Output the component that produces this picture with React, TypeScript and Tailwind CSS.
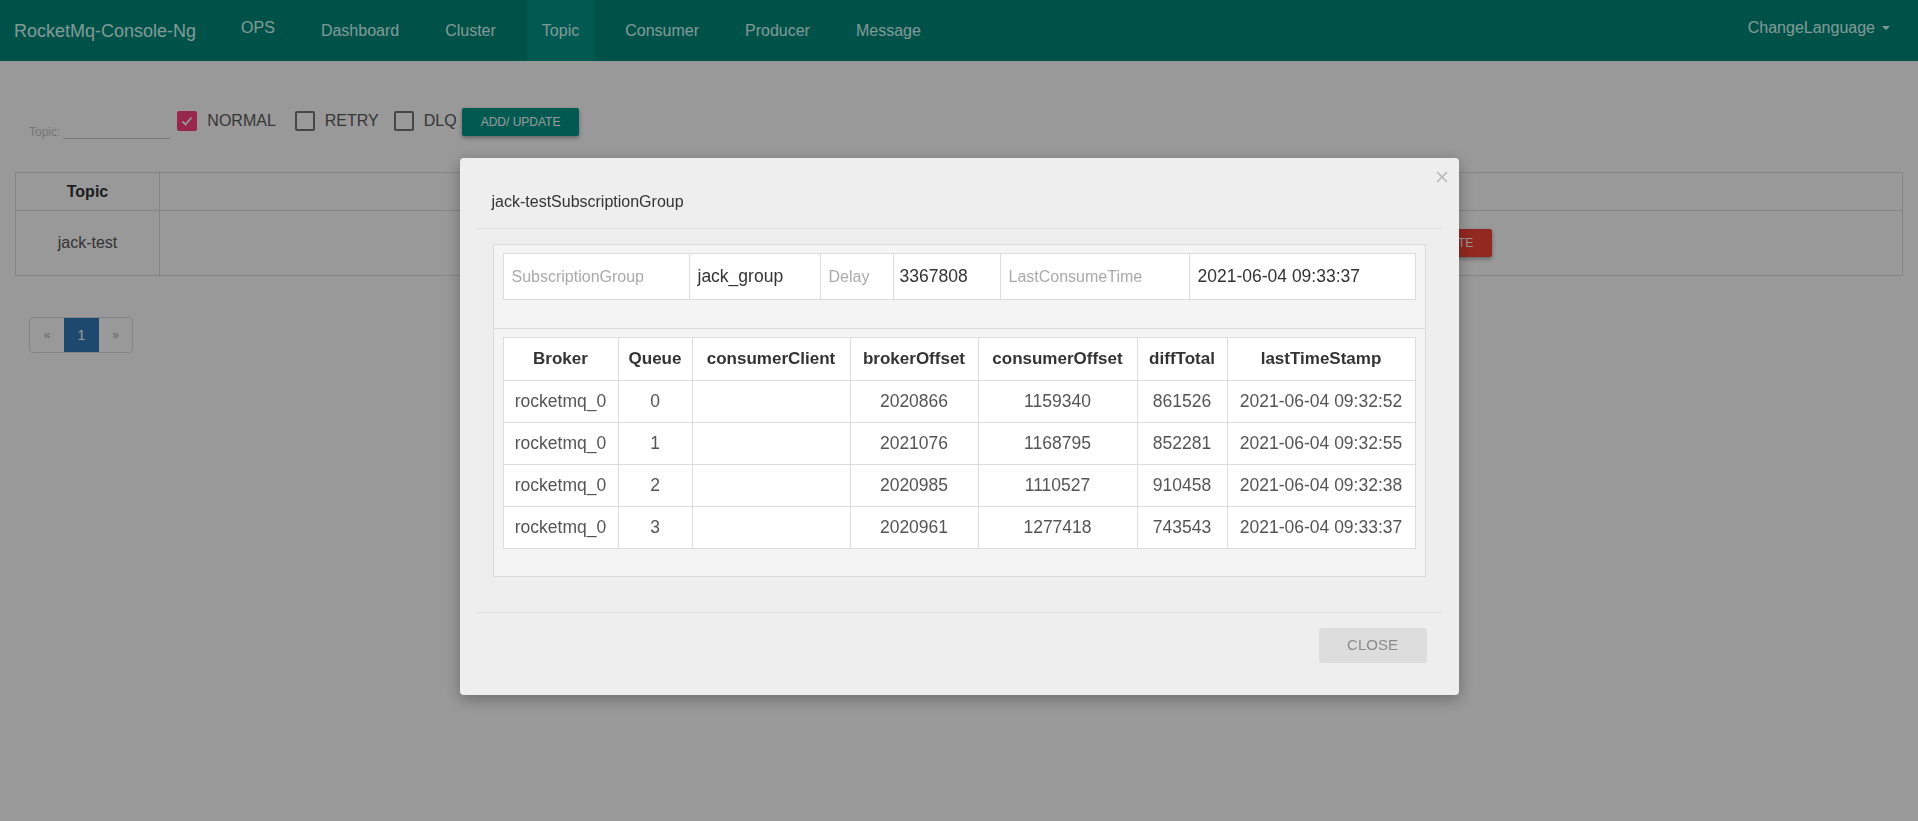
import React from "react";

const navItems = ["Dashboard", "Cluster", "Topic", "Consumer", "Producer", "Message"];

const rowButtons = [
  "STATUS",
  "ROUTER",
  "CONSUMER MANAGE",
  "TOPIC CONFIG",
  "SEND MESSAGE",
  "RESET CONSUMER OFFSET",
  "DELETE",
];

const queueRows = [
  { broker: "rocketmq_0", queue: "0", client: "", brokerOffset: "2020866", consumerOffset: "1159340", diff: "861526", ts: "2021-06-04 09:32:52" },
  { broker: "rocketmq_0", queue: "1", client: "", brokerOffset: "2021076", consumerOffset: "1168795", diff: "852281", ts: "2021-06-04 09:32:55" },
  { broker: "rocketmq_0", queue: "2", client: "", brokerOffset: "2020985", consumerOffset: "1110527", diff: "910458", ts: "2021-06-04 09:32:38" },
  { broker: "rocketmq_0", queue: "3", client: "", brokerOffset: "2020961", consumerOffset: "1277418", diff: "743543", ts: "2021-06-04 09:33:37" },
];

function Checkbox({ label, checked, mr }: { label: string; checked?: boolean; mr: string }) {
  return (
    <label className={`flex items-center h-[20px] mt-[3px] ${mr}`}>
      {checked ? (
        <span className="w-[20px] h-[20px] rounded-[2px] bg-[#ff4081] flex items-center justify-center">
          <svg width="14" height="14" viewBox="0 0 14 14">
            <polyline points="2.5,7.5 5.5,10.5 11.5,3.5" fill="none" stroke="#ffffff" strokeWidth="1.8" />
          </svg>
        </span>
      ) : (
        <span className="w-[20px] h-[20px] rounded-[2px] border-2 border-[#757575] bg-white" />
      )}
      <span className="ml-[10px] text-[16px] text-[#5a5a5a] leading-[20px]">{label}</span>
    </label>
  );
}

export default function App() {
  return (
    <div className="relative w-full h-[821px] overflow-hidden bg-white font-['Liberation_Sans',Arial,sans-serif]">
      {/* Navbar */}
      <nav className="h-[61px] bg-[#00897b] flex items-stretch text-[#d9fff8]">
        <div className="pl-[14px] pr-[14px] flex items-center text-[18px] pt-[1px]">RocketMq-Console-Ng</div>
        <ul className="ml-[16px] flex items-stretch gap-[16px]">
          <li className="px-[15px] flex items-center text-[16px] pb-[5px]">OPS</li>
          {navItems.map((n) => (
            <li
              key={n}
              className={`px-[15px] flex items-center text-[16px] pt-[1px] ${n === "Topic" ? "bg-[#009688]" : ""}`}
            >
              {n}
            </li>
          ))}
        </ul>
        <div className="ml-auto pr-[28px] flex items-center text-[16px] pb-[5px]">
          ChangeLanguage
          <span className="ml-[7px] w-0 h-0 border-t-[4px] border-t-[#d9fff8] border-x-[4px] border-x-transparent" />
        </div>
      </nav>

      {/* Page content */}
      <main className="px-[15px]">
        <div className="mt-[47px] pl-[14px] flex items-start">
          <div className="mt-[14px] flex items-end h-[17px]">
            <span className="text-[12px] leading-[14px] text-[#c6c6c6]">Topic:</span>
            <span className="ml-[3px] w-[107px] h-[17px] border-b border-[#c6c6c6]" />
          </div>
          <div className="ml-[7px] flex items-start">
            <Checkbox label="NORMAL" checked mr="mr-[19px]" />
            <Checkbox label="RETRY" mr="mr-[15px]" />
            <Checkbox label="DLQ" mr="mr-[5px]" />
          </div>
          <button className="h-[28px] px-[19px] rounded-[2px] bg-[#009688] text-white text-[12px] shadow-[0_2px_4px_rgba(0,0,0,0.35)]">
            ADD/ UPDATE
          </button>
        </div>

        <table className="mt-[33px] w-full border-collapse border border-[#dddddd] table-fixed">
          <colgroup>
            <col className="w-[144px]" />
            <col />
          </colgroup>
          <thead>
            <tr className="h-[38px]">
              <th className="border border-[#dddddd] text-[16px] font-bold text-[#333333]">Topic</th>
              <th className="border border-[#dddddd] text-[16px] font-bold text-[#333333]">Operation</th>
            </tr>
          </thead>
          <tbody>
            <tr className="h-[65px]">
              <td className="border border-[#dddddd] text-center text-[16px] text-[#555555]">jack-test</td>
              <td className="border border-[#dddddd]">
                <div className="flex justify-center gap-[7px]">
                  {rowButtons.map((b) => (
                    <button
                      key={b}
                      className={`h-[28px] px-[19px] rounded-[2px] text-[12px] text-white whitespace-nowrap shadow-[0_2px_4px_rgba(0,0,0,0.35)] ${
                        b === "DELETE" ? "bg-[#f44336]" : "bg-[#009688]"
                      }`}
                    >
                      {b}
                    </button>
                  ))}
                </div>
              </td>
            </tr>
          </tbody>
        </table>

        <div className="mt-[41px] ml-[14px] inline-flex h-[36px] rounded-[4px] border border-[#dddddd] overflow-hidden text-[12px]">
          <span className="w-[34px] flex items-center justify-center text-[#aaaaaa]">«</span>
          <span className="w-[35px] flex items-center justify-center bg-[#337ab7] text-white text-[14px]">1</span>
          <span className="w-[33px] flex items-center justify-center text-[#aaaaaa]">»</span>
        </div>
      </main>

      {/* Backdrop */}
      <div className="fixed inset-0 bg-black/40" />

      {/* Modal */}
      <div className="fixed inset-0 flex justify-center items-start pt-[158px]">
        <div className="relative w-[999px] bg-[#eeeeee] rounded-[4px] shadow-[0_4px_16px_rgba(0,0,0,0.3)]">
          <button className="absolute top-[13px] right-[11px] w-[12px] h-[12px]">
            <svg width="12" height="12" viewBox="0 0 12 12">
              <line x1="1" y1="1" x2="11" y2="11" stroke="#b3b3b3" strokeWidth="1.4" />
              <line x1="11" y1="1" x2="1" y2="11" stroke="#b3b3b3" strokeWidth="1.4" />
            </svg>
          </button>

          <div className="mx-[18px] border-b border-[#dddddd]">
            <div className="h-[70px] pt-[17px] pl-[14px] flex items-center text-[16px] text-[#333333]">
              jack-testSubscriptionGroup
            </div>
          </div>

          <div className="px-[33px] pt-[15px] pb-[35px]">
            <div className="border border-[#dadada] bg-[#f4f4f4]">
              <div className="px-[9px] pt-[8px] pb-[28px] border-b border-[#dadada]">
                <table className="w-full table-fixed border-collapse bg-white border border-[#dddddd]">
                  <colgroup>
                    <col className="w-[186px]" />
                    <col className="w-[131px]" />
                    <col className="w-[73px]" />
                    <col className="w-[107px]" />
                    <col className="w-[189px]" />
                    <col />
                  </colgroup>
                  <tbody>
                    <tr className="h-[46px]">
                      <td className="border border-[#dddddd] px-[8px] text-[16px] text-[#aaaaaa]">SubscriptionGroup</td>
                      <td className="border border-[#dddddd] px-[8px] text-[17.5px] text-[#333333]">jack_group</td>
                      <td className="border border-[#dddddd] px-[8px] text-[16px] text-[#aaaaaa]">Delay</td>
                      <td className="border border-[#dddddd] px-[6px] text-[17.5px] text-[#333333]">3367808</td>
                      <td className="border border-[#dddddd] px-[8px] text-[16px] text-[#aaaaaa]">LastConsumeTime</td>
                      <td className="border border-[#dddddd] px-[8px] text-[17.5px] text-[#333333]">2021-06-04 09:33:37</td>
                    </tr>
                  </tbody>
                </table>
              </div>
              <div className="px-[9px] pt-[8px] pb-[27px]">
                <table className="w-full table-fixed border-collapse bg-white border border-[#dddddd]">
                  <colgroup>
                    <col className="w-[115px]" />
                    <col className="w-[74px]" />
                    <col className="w-[158px]" />
                    <col className="w-[128px]" />
                    <col className="w-[159px]" />
                    <col className="w-[90px]" />
                    <col />
                  </colgroup>
                  <thead>
                    <tr className="h-[43px]">
                      {["Broker", "Queue", "consumerClient", "brokerOffset", "consumerOffset", "diffTotal", "lastTimeStamp"].map((h) => (
                        <th key={h} className="border border-[#dddddd] text-[17px] font-bold text-[#333333] text-center whitespace-nowrap">
                          {h}
                        </th>
                      ))}
                    </tr>
                  </thead>
                  <tbody>
                    {queueRows.map((r) => (
                      <tr key={r.queue} className="h-[42px] text-[17.5px] text-[#555555] text-center">
                        <td className="border border-[#dddddd] whitespace-nowrap">{r.broker}</td>
                        <td className="border border-[#dddddd]">{r.queue}</td>
                        <td className="border border-[#dddddd]">{r.client}</td>
                        <td className="border border-[#dddddd]">{r.brokerOffset}</td>
                        <td className="border border-[#dddddd]">{r.consumerOffset}</td>
                        <td className="border border-[#dddddd]">{r.diff}</td>
                        <td className="border border-[#dddddd] whitespace-nowrap">{r.ts}</td>
                      </tr>
                    ))}
                  </tbody>
                </table>
              </div>
            </div>
          </div>

          <div className="mx-[18px] border-t border-[#dddddd] pt-[15px] pb-[32px] pr-[14px] flex justify-end">
            <button className="w-[108px] h-[35px] rounded-[3px] bg-[#dddddd] text-[15px] text-[#8a8a8a]">CLOSE</button>
          </div>
        </div>
      </div>
    </div>
  );
}
